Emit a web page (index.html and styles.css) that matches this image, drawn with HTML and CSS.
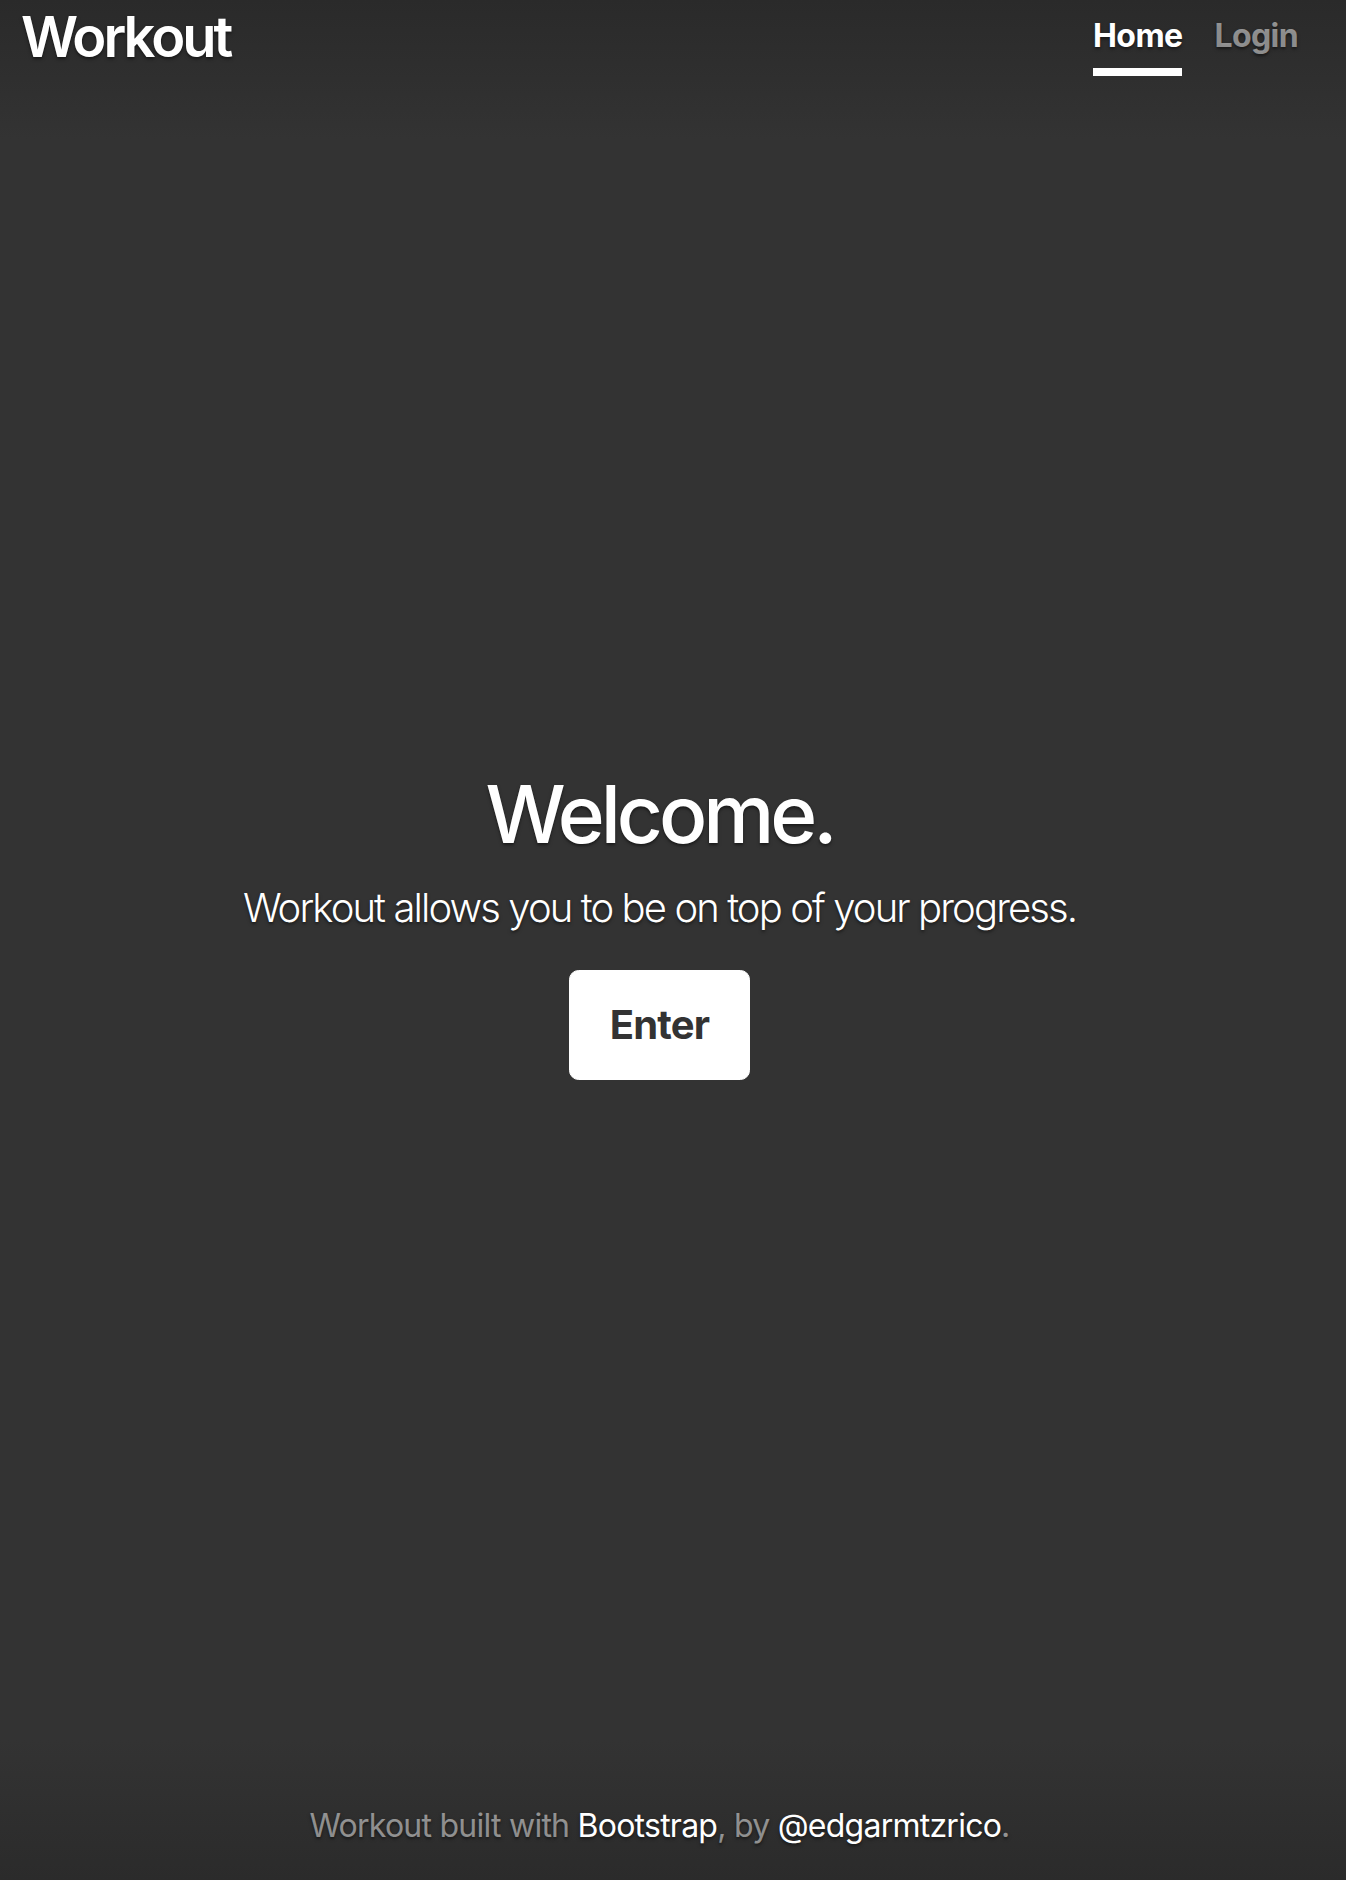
FILE: index.html
```html
<!DOCTYPE html>
<html lang="en">
<head>
<meta charset="utf-8">
<title>Workout</title>
<link rel="stylesheet" href="styles.css">
</head>
<body>
<div class="cover">
  <header class="masthead">
    <h3 class="brand">Workout</h3>
    <nav class="nav">
      <a class="nav-link active" href="#">Home</a>
      <a class="nav-link" href="#">Login</a>
    </nav>
  </header>
  <main class="inner">
    <h1 class="heading">Welcome.</h1>
    <p class="lead">Workout allows you to be on top of your progress.</p>
    <p class="lead-btn"><a class="btn" href="#">Enter</a></p>
  </main>
  <footer class="footer">
    <p>Workout built with <a href="#">Bootstrap</a>, by <a href="#">@edgarmtzrico</a>.</p>
  </footer>
</div>
</body>
</html>
```
FILE: styles.css
```css
html, body {
  height: 100%;
}
body {
  margin: 0;
  background-color: #333;
  background-image: linear-gradient(to bottom, #2a2a2a 0px, #333 140px, #333 calc(100% - 140px), #2b2b2b 100%);
  color: #fff;
  font-family: Inter, "Noto Sans", sans-serif;
  text-shadow: 0 1.6px 3.2px rgba(0, 0, 0, 0.5);
}
.cover {
  display: flex;
  flex-direction: column;
  min-height: 100vh;
  box-sizing: border-box;
  padding: 4px 48px 30px 21px;
}
.masthead {
  display: flex;
  justify-content: space-between;
  align-items: flex-start;
  margin-bottom: auto;
}
.brand {
  margin: 0;
  font-size: 56px;
  font-weight: 600;
  line-height: 1.2;
  letter-spacing: -3px;
}
.nav {
  display: flex;
}
.nav-link {
  display: block;
  padding: 8px 0;
  margin-left: 32px;
  font-size: 32px;
  font-weight: 700;
  line-height: 1.5;
  letter-spacing: -0.6px;
  color: rgba(255, 255, 255, 0.5);
  text-decoration: none;
  border-bottom: 8px solid transparent;
}
.nav-link.active {
  color: #fff;
  border-bottom-color: #fff;
}
.inner {
  text-align: center;
  padding: 0 48px;
}
.heading {
  margin: 0 0 16px;
  font-size: 80px;
  font-weight: 500;
  line-height: 1.2;
  letter-spacing: -4px;
}
.lead {
  margin: 0 0 32px;
  font-size: 40px;
  font-weight: 300;
  line-height: 1.5;
  letter-spacing: -1.9px;
}
.lead-btn {
  margin: 0 0 32px;
  font-size: 40px;
  line-height: 1.5;
}
.btn {
  display: inline-block;
  padding: 24px 40px;
  font-size: 40px;
  font-weight: 700;
  line-height: 1.5;
  letter-spacing: -0.8px;
  color: #333;
  background: #fff;
  border: 1.6px solid #fff;
  border-radius: 9.6px;
  text-decoration: none;
  text-shadow: none;
}
.footer {
  margin-top: auto;
  text-align: center;
  color: rgba(255, 255, 255, 0.5);
}
.footer p {
  margin: 0;
  font-size: 32px;
  line-height: 1.5;
  letter-spacing: -0.75px;
}
.footer a {
  color: #fff;
  text-decoration: none;
}
```
